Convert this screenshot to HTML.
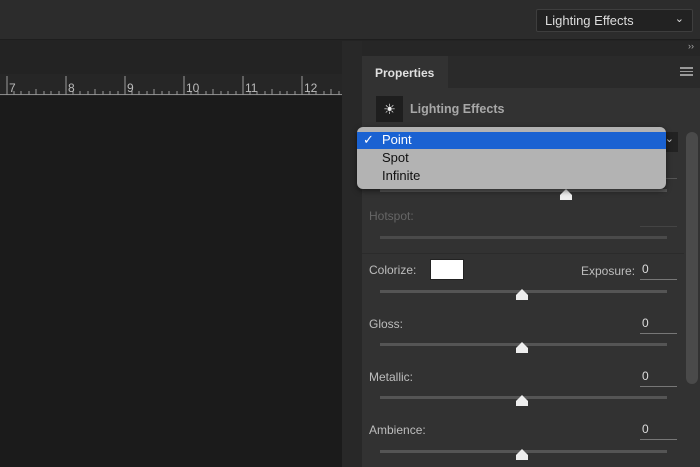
<!DOCTYPE html><html><head><style>
body{margin:0;width:700px;height:467px;overflow:hidden;background:#232323;font-family:"Liberation Sans",sans-serif;position:relative}
div{position:absolute;box-sizing:border-box}
.t{color:#bdbdbd;font-size:12px}
.tr{height:3px;background:#555;left:380px;width:287px}
.th{width:0;height:0;border-left:6px solid transparent;border-right:6px solid transparent;border-bottom:6px solid #eee}
.tb{width:12px;height:5px;background:#eee}
.v{left:640px;width:37px;border-bottom:1px solid #777;color:#ddd;font-size:12px;padding-left:2px;height:18px}
</style></head><body>
<div style="left:0;top:0;width:700px;height:40px;background:#2c2c2c;border-bottom:1px solid #1e1e1e"></div>
<div style="left:536px;top:9px;width:157px;height:23px;background:#222;border:1px solid #3e3e3e;border-radius:2px;color:#ddd;font-size:13px;padding:3px 8px">Lighting Effects<span style="position:absolute;right:8px;top:2px;font-size:11px">&#8964;</span></div>
<div style="left:0;top:74px;width:342px;height:21px;background:#262626;border-bottom:1px solid #888"></div>
<svg style="position:absolute;left:0;top:74px" width="342" height="22">
<g stroke="#999" stroke-width="1">
<path d="M7 2V21M66 2V21M125 2V21M184 2V21M243 2V21M302 2V21"/>
<path d="M14 17V21M21 17V21M29 17V21M36 15V21M44 17V21M51 17V21M59 17V21M73 17V21M80 17V21M88 17V21M95 15V21M103 17V21M110 17V21M118 17V21M132 17V21M139 17V21M147 17V21M154 15V21M162 17V21M169 17V21M177 17V21M191 17V21M198 17V21M206 17V21M213 15V21M221 17V21M228 17V21M236 17V21M250 17V21M257 17V21M265 17V21M272 15V21M280 17V21M287 17V21M295 17V21M309 17V21M316 17V21M324 17V21M331 15V21M339 17V21"/></g>
<g fill="#bbb" font-size="12" font-family="Liberation Sans"><text x="9" y="18">7</text><text x="68" y="18">8</text><text x="127" y="18">9</text><text x="186" y="18">10</text><text x="245" y="18">11</text><text x="304" y="18">12</text></g></svg>
<div style="left:0;top:96px;width:342px;height:371px;background:#1b1b1b"></div>
<div style="left:342px;top:41px;width:20px;height:426px;background:#282828"></div>
<div style="left:362px;top:41px;width:338px;height:15px;background:#262626;color:#aaa;font-size:9px;text-align:right;padding-right:6px">&#8250;&#8250;</div>
<div style="left:362px;top:56px;width:338px;height:32px;background:#2a2a2a"></div>
<div style="left:362px;top:56px;width:86px;height:32px;background:#323232;color:#e0e0e0;font-weight:bold;font-size:12px;padding:10px 13px">Properties</div>
<div style="left:680px;top:67px;width:13px;height:9px;border-top:2px solid #999;border-bottom:2px solid #999"><div style="left:0;top:2px;width:13px;height:1px;background:#999"></div></div>
<div style="left:362px;top:88px;width:338px;height:379px;background:#323232"></div>
<div style="left:376px;top:96px;width:27px;height:26px;background:#1e1e1e;color:#eee;font-size:14px;text-align:center;line-height:26px">&#9728;</div>
<div style="left:410px;top:102px;color:#a8a8a8;font-size:12.5px;font-weight:bold">Lighting Effects</div>
<div style="left:646px;top:132px;width:32px;height:20px;background:#222;color:#ccc;font-size:11px;text-align:right;padding-right:4px">&#8964;</div>
<div style="left:686px;top:132px;width:12px;height:252px;background:#4a4a4a;border-radius:6px"></div>
<div style="left:640px;top:178px;width:37px;border-bottom:1px solid #555"></div>
<div class="tr" style="top:189px"></div><div class="th" style="left:560px;top:189px"></div><div class="tb" style="left:560px;top:195px"></div>
<div class="t" style="left:369px;top:209px;color:#666">Hotspot:</div>
<div style="left:640px;top:226px;width:37px;border-bottom:1px solid #444"></div>
<div class="tr" style="top:236px;background:#4a4a4a"></div>
<div style="left:362px;top:253px;width:322px;height:1px;background:#2b2b2b"></div>
<div class="t" style="left:369px;top:263px">Colorize:</div>
<div style="left:430px;top:259px;width:34px;height:21px;background:#fff;border:1px solid #222"></div>
<div class="t" style="left:581px;top:264px">Exposure:</div>
<div class="v" style="top:262px">0</div>
<div class="tr" style="top:290px"></div><div class="th" style="left:516px;top:289px"></div><div class="tb" style="left:516px;top:295px"></div>
<div class="t" style="left:369px;top:317px">Gloss:</div><div class="v" style="top:316px">0</div>
<div class="tr" style="top:343px"></div><div class="th" style="left:516px;top:342px"></div><div class="tb" style="left:516px;top:348px"></div>
<div class="t" style="left:369px;top:370px">Metallic:</div><div class="v" style="top:369px">0</div>
<div class="tr" style="top:396px"></div><div class="th" style="left:516px;top:395px"></div><div class="tb" style="left:516px;top:401px"></div>
<div class="t" style="left:369px;top:423px">Ambience:</div><div class="v" style="top:422px">0</div>
<div class="tr" style="top:450px"></div><div class="th" style="left:516px;top:449px"></div><div class="tb" style="left:516px;top:455px"></div>
<div style="left:357px;top:127px;width:309px;height:62px;background:#b3b3b3;border-radius:6px;overflow:hidden;box-shadow:0 2px 6px rgba(0,0,0,.5)">
<div style="left:0;top:5px;width:309px;height:17px;background:#1a62d2"></div>
<div style="left:6px;top:5px;color:#fff;font-size:13px">&#10003;</div>
<div style="left:25px;top:5px;color:#fff;font-size:13px">Point</div>
<div style="left:25px;top:23px;color:#111;font-size:13px">Spot</div>
<div style="left:25px;top:41px;color:#111;font-size:13px">Infinite</div>
</div>
</body></html>
